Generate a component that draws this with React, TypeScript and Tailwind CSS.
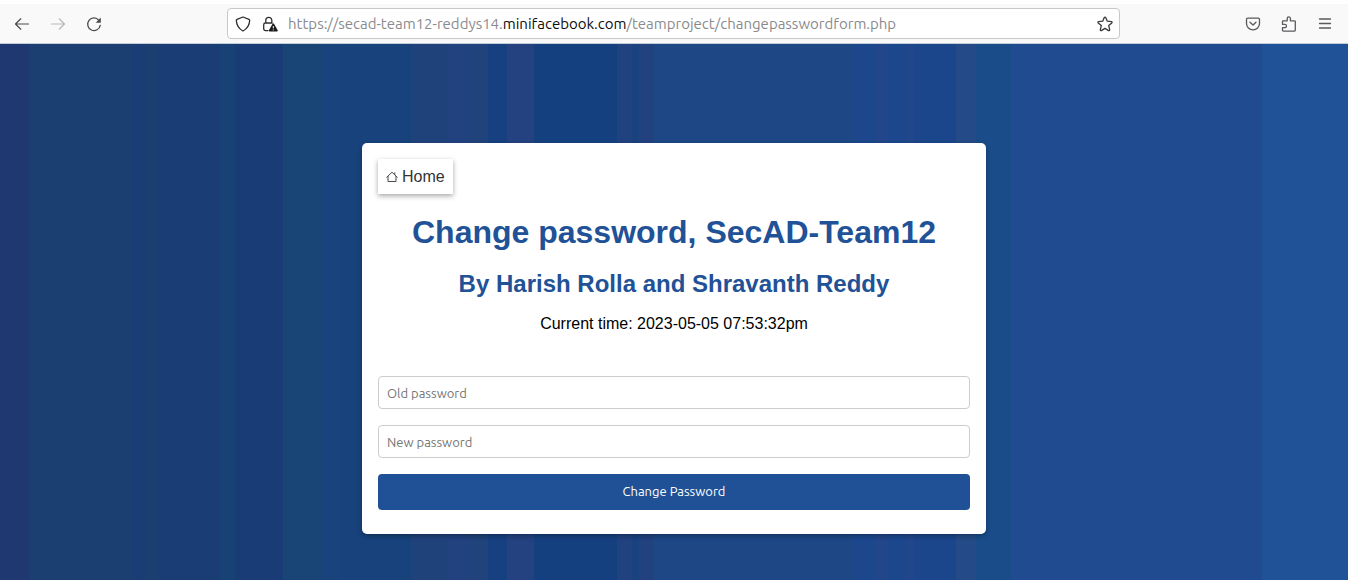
import React from "react";

const iconButton = "flex size-8 items-center justify-center";

function BackIcon() {
  return (
    <svg className="size-4" viewBox="0 0 16 16" fill="none" stroke="#4a4a4c" strokeWidth="1.2" strokeLinecap="round" strokeLinejoin="round" aria-hidden="true">
      <path d="M14.5 8H1.5M6.800 2.800 1.500 8l5.300 5.200" />
    </svg>
  );
}

function ForwardIcon() {
  return (
    <svg className="size-4" viewBox="0 0 16 16" fill="none" stroke="#b9b9bb" strokeWidth="1.2" strokeLinecap="round" strokeLinejoin="round" aria-hidden="true">
      <path d="M1.500 8h13M9.200 2.800 14.500 8l-5.300 5.200" />
    </svg>
  );
}

function ReloadIcon() {
  return (
    <svg className="size-4" viewBox="0 0 16 16" fill="none" stroke="#4a4a4c" strokeWidth="1.300" strokeLinecap="round" aria-hidden="true">
      <path d="M12.900 4.300A6.300 6.300 0 1 0 14.200 9.300" />
      <path d="M14.800 1.600v4.600a.5.5 0 0 1-.5.5H9.700z" fill="#4a4a4c" stroke="none" />
    </svg>
  );
}

function ShieldIcon() {
  return (
    <svg className="size-4" viewBox="0 0 16 16" fill="none" stroke="#2f2f33" strokeWidth="1.300" strokeLinejoin="round" aria-hidden="true">
      <path d="M8 1 14 3.300c.4.200.7.500.7 1C14.500 9 12.400 12.600 8 15 3.600 12.600 1.500 9 1.300 4.300c0-.5.300-.8.700-1z" />
    </svg>
  );
}

function LockWarningIcon() {
  return (
    <svg className="size-4" viewBox="0 0 16 16" fill="none" aria-hidden="true">
      <path d="M3.800 7V4.300a3 3 0 0 1 6 0V7M6 14.600H3.500a1.800 1.800 0 0 1-1.800-1.800V8.800A1.800 1.800 0 0 1 3.500 7h6.700" stroke="#2f2f33" strokeWidth="1.300" strokeLinecap="round" />
      <path d="M10.600 7.700a.8.8 0 0 1 1.400 0l3.700 6.500a.8.8 0 0 1-.7 1.200H7.600a.8.8 0 0 1-.7-1.200z" fill="#1b1b1e" />
      <path d="M11.300 10v2.400M11.300 13.500v.9" stroke="#fff" strokeWidth="1" />
    </svg>
  );
}

function StarIcon() {
  return (
    <svg className="size-4" viewBox="0 0 16 16" fill="none" stroke="#38383b" strokeWidth="1.300" strokeLinejoin="round" aria-hidden="true">
      <path d="M7.300 1.500a.8.8 0 0 1 1.400 0l1.600 3.700 4.100.4c.7.100.9.800.4 1.300l-3.100 2.700 1 4.200c.1.700-.5 1.100-1.100.8L8 12.400l-3.600 2.200c-.6.300-1.200-.1-1.100-.8l1-4.200L1.200 6.900c-.5-.5-.3-1.200.4-1.300l4.100-.4z" />
    </svg>
  );
}

function PocketIcon() {
  return (
    <svg className="size-4" viewBox="0 0 16 16" fill="none" stroke="#5a5a5c" strokeWidth="1.300" strokeLinecap="round" strokeLinejoin="round" aria-hidden="true">
      <path d="M2.800 2.100h10.400a1.300 1.300 0 0 1 1.300 1.300v4.200a6.500 6.200 0 0 1-13 0V3.400a1.300 1.300 0 0 1 1.300-1.300z" />
      <path d="m5 6.300 3 2.800 3-2.800" />
    </svg>
  );
}

function ExtensionIcon() {
  return (
    <svg className="size-4" viewBox="0 0 16 16" fill="none" stroke="#5a5a5c" strokeWidth="1.300" strokeLinejoin="round" aria-hidden="true">
      <path d="M2.300 4.800h3.900V2.500a1.600 1.600 0 0 1 3.200 0v2.300h4.100a.8.8 0 0 1 .8.800v8.700a.8.8 0 0 1-.8.800H2.300a.8.8 0 0 1-.8-.8v-2.600h2.300a1.600 1.600 0 0 0 0-3.300H1.500V5.600a.8.8 0 0 1 .8-.8z" />
    </svg>
  );
}

function MenuIcon() {
  return (
    <svg className="size-4" viewBox="0 0 16 16" fill="none" stroke="#5a5a5c" strokeWidth="1.300" strokeLinecap="round" aria-hidden="true">
      <path d="M2.500 3h11M2.500 7.500h11M2.500 12h11" />
    </svg>
  );
}

function HomeIcon() {
  return (
    <svg className="size-3" viewBox="0 0 12 12" fill="none" stroke="#4b4b4b" strokeWidth="1" strokeLinejoin="round" strokeLinecap="round" aria-hidden="true">
      <path d="M.7 6.300 6 1.200l5.300 5.100M2 5.300v5.200h8V5.300M8.800 1.800v1.800" />
    </svg>
  );
}

function BrowserBar() {
  return (
    <header className="flex h-11 border-t-4 border-b border-t-white border-b-[#c3cbd8] bg-[#f9f9fa]">
      <nav className="flex w-[227px] shrink-0 items-center gap-1 pl-1.5" aria-label="History">
        <button type="button" className={iconButton} aria-label="Back"><BackIcon /></button>
        <button type="button" className={iconButton} aria-label="Forward"><ForwardIcon /></button>
        <button type="button" className={iconButton} aria-label="Reload"><ReloadIcon /></button>
      </nav>
      <div className="my-1 flex min-w-0 flex-1 items-center rounded-sm border border-[#c8c8ca] bg-white pr-1.5 pl-[7px]">
        <button type="button" aria-label="Tracking protection"><ShieldIcon /></button>
        <button type="button" className="ml-[11px]" aria-label="Connection"><LockWarningIcon /></button>
        <p className="ml-2.5 min-w-0 flex-1 truncate text-[15px] leading-6 text-[#8a8a8d]">
          https://secad-team12-reddys14.<span className="text-[#0c0c0d]">minifacebook.com</span>/teamproject/changepasswordform.php
        </p>
        <button type="button" aria-label="Bookmark"><StarIcon /></button>
      </div>
      <div className="flex w-[228px] shrink-0 items-center justify-end gap-1 pr-[7px]">
        <button type="button" className={iconButton} aria-label="Pocket"><PocketIcon /></button>
        <button type="button" className={iconButton} aria-label="Extensions"><ExtensionIcon /></button>
        <button type="button" className={iconButton} aria-label="Menu"><MenuIcon /></button>
      </div>
    </header>
  );
}

function PasswordField({ label }: { label: string }) {
  return (
    <input
      type="password"
      aria-label={label}
      placeholder={label}
      className="mb-4 block h-[33px] w-full rounded-sm border border-[#cccccc] bg-white px-2 text-[13px] text-black placeholder:text-[#757575]"
    />
  );
}

export default function App() {
  return (
    <div className="flex min-h-screen flex-col font-['Ubuntu','Noto_Sans',sans-serif]">
      <BrowserBar />
      <main className="flex-1 bg-[linear-gradient(to_right,#1f3872_0_2.2%,#1b3f70_2.2%_9.7%,#1a3d76_9.7%_10.8%,#1b3f70_10.8%_11.7%,#1a3d75_11.7%_16.3%,#184276_16.3%_17.4%,#1a3c76_17.4%_21%,#184476_21%_23.8%,#18437c_23.8%_25.4%,#17427b_25.4%_30.5%,#20427b_30.5%_33.2%,#21417f_33.2%_34.9%,#1f437a_34.9%_36.2%,#16407f_36.2%_37.6%,#23427f_37.6%_39.6%,#15407f_39.6%_45.8%,#20427f_45.8%_46.9%,#19427f_46.9%_47.4%,#21427f_47.4%_48.5%,#1d4785_48.5%_63.3%,#1c478d_63.3%_64.9%,#22468a_64.9%_65.9%,#1c478d_65.9%_67.2%,#22468a_67.2%_67.8%,#1b468b_67.8%_70.9%,#244b87_70.9%_72.4%,#1a4c8a_72.4%_75%,#214b90_75%_93.6%,#1f5297_93.6%)] px-4 pt-[99px] pb-[46px]">
        <section className="mx-auto w-full max-w-[624px] rounded-[5px] bg-white px-4 pt-4 pb-6 font-['Liberation_Sans',Arial,sans-serif] shadow-[0_2px_5px_rgba(0,0,0,0.3)]">
          <a href="index.php" className="inline-flex h-[35px] items-center gap-1 bg-white px-2 align-top text-base text-[#333333] shadow-[0_2px_5px_rgba(0,0,0,0.35)]">
            <HomeIcon />
            Home
          </a>
          <div className="text-center">
            <h1 className="mt-5 text-[32px] leading-9 font-bold text-[#215196]">Change password, SecAD-Team12</h1>
            <h2 className="mt-5 text-2xl leading-7 font-bold text-[#215196]">By Harish Rolla and Shravanth Reddy</h2>
            <p className="mt-4 text-base leading-5 text-black">Current time: 2023-05-05 07:53:32pm</p>
          </div>
          <form className="mt-[42px] font-['Ubuntu','Noto_Sans',sans-serif]" onSubmit={(event) => event.preventDefault()}>
            <PasswordField label="Old password" />
            <PasswordField label="New password" />
            <button type="submit" className="block h-9 w-full rounded-sm bg-[#205196] text-[13px] text-white">
              Change Password
            </button>
          </form>
        </section>
      </main>
    </div>
  );
}
